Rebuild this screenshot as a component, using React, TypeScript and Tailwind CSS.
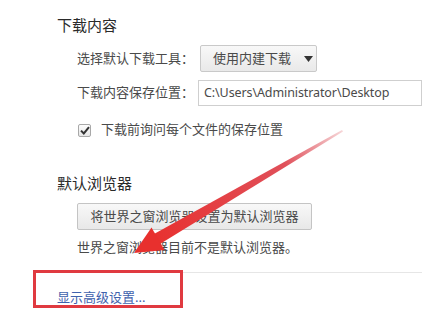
const cjk = "font-['Noto_Sans','Noto_Sans_CJK_SC',sans-serif]"

function Arrow() {
  // red annotation arrow drawn over the page
  return (
    <svg className="pointer-events-none absolute left-0 top-0" width="434" height="318" viewBox="0 0 434 318">
      <defs>
        <linearGradient id="shaft" x1="342" y1="130" x2="150" y2="243" gradientUnits="userSpaceOnUse">
          <stop offset="0" stopColor="#f6d6d8" />
          <stop offset="0.3" stopColor="#e0505a" />
          <stop offset="1" stopColor="#e8302e" />
        </linearGradient>
      </defs>
      <polygon points="342,130 343,131.5 160,244 154,234" fill="url(#shaft)" />
      <polygon points="134,253 151.5,227.5 164.5,250" fill="#e8302e" />
    </svg>
  )
}

export default function App() {
  return (
    <div className={`relative h-[318px] w-[434px] overflow-hidden bg-white text-[#333] ${cjk}`}>
      <div className="flex flex-col pl-[57px] pt-[15px]">
        <h3 className="text-[15px] leading-[20px] text-[#2a2a2a]">下载内容</h3>
        <div className="ml-[20px] flex flex-col">
          <div className="mt-[10px] flex h-[27px] items-center">
            <span className="w-[123px] text-[13px] text-[#4a4a4a]">选择默认下载工具：</span>
            <div className="flex h-[27px] w-[117px] items-center rounded-[2px] border border-[#c9c9c9] bg-gradient-to-b from-[#f8f8f8] to-[#e9e9e9] pl-[12px] text-[13px] text-[#4a4a4a]">
              <span>使用内建下载</span>
              <svg className="ml-[13px]" width="9" height="6" viewBox="0 0 9 6">
                <polygon points="0,0 9,0 4.5,6" fill="#333" />
              </svg>
            </div>
          </div>
          <div className="mt-[8px] flex h-[26px] items-center">
            <span className="w-[121px] text-[13px] text-[#4a4a4a]">下载内容保存位置：</span>
            <div className="flex h-[26px] w-[224px] items-center border border-[#cfcfcf] pl-[5px] text-[12.5px] tracking-[-0.1px] text-[#4a4a4a]">
              C:\Users\Administrator\Desktop
            </div>
          </div>
          <label className="mt-[15px] flex h-[18px] items-center">
            <span className="ml-px flex h-[13px] w-[13px] items-center justify-center rounded-[2px] border border-[#a8a8a8] bg-gradient-to-b from-[#fdfdfd] to-[#e6e6e6]">
              <svg width="10" height="9" viewBox="0 0 10 9">
                <path d="M1 4.6 L3.8 7.4 L9 1.2" fill="none" stroke="#333" strokeWidth="2" />
              </svg>
            </span>
            <span className="ml-[10px] text-[13px] text-[#4a4a4a]">下载前询问每个文件的保存位置</span>
          </label>
        </div>

        <h3 className="mt-[34px] text-[15px] leading-[20px] text-[#2a2a2a]">默认浏览器</h3>
        <div className="ml-[20px] flex flex-col items-start">
          <button className="mt-[10px] flex h-[27px] w-[235px] items-center justify-center rounded-[2px] border border-[#c4c4c4] bg-gradient-to-b from-[#f8f8f8] to-[#e8e8e8] text-[13px] text-[#4a4a4a]">
            将世界之窗浏览器设置为默认浏览器
          </button>
          <p className="mt-[8px] text-[13px] leading-[18px] text-[#4a4a4a]">世界之窗浏览器目前不是默认浏览器。</p>
        </div>
      </div>

      <div className="ml-[33px] mt-[16px] h-px w-[389px] bg-[#e6e6e6]" />
      <a href="#" className="ml-[57px] mt-[15px] block text-[13px] leading-[18px] text-[#3f62ad]">
        显示高级设置...
      </a>

      <div className="absolute left-[33px] top-[270px] h-[38px] w-[150px] border-[3px] border-[#e03a40]" />
      <Arrow />
    </div>
  )
}
